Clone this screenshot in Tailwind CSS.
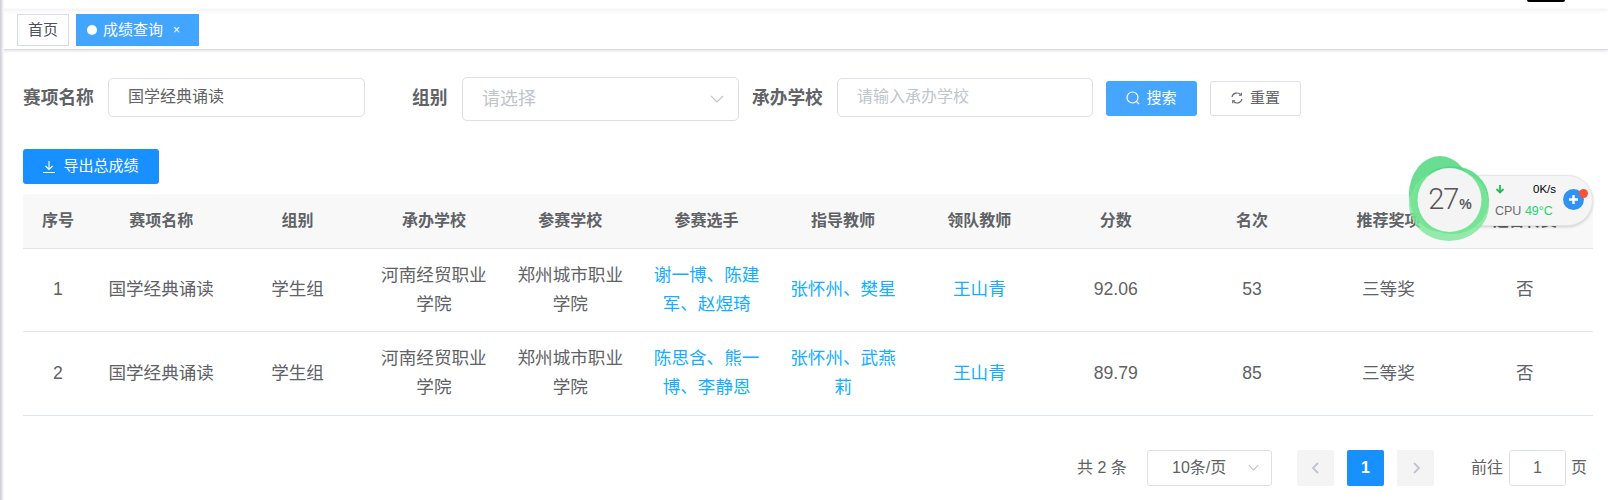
<!DOCTYPE html>
<html lang="zh-CN">
<head>
  <meta charset="UTF-8" />
  <title>成绩查询</title>
  <script src="https://cdn.jsdelivr.net/npm/@tailwindcss/browser@4"></script>
</head>
<body class="relative h-[500px] w-[1608px] overflow-hidden bg-white font-['Liberation_Sans','Noto_Sans_CJK_SC',sans-serif] text-[#606266]">

  <!-- left shadow of the sidebar -->
  <div class="absolute left-0 top-0 h-full w-[4px] bg-gradient-to-r from-[#c9cbd2] to-white"></div>
  <div class="absolute left-[1527px] top-0 h-[2px] w-[38px] rounded-b-full bg-black"></div>

  <!-- Tabs -->
  <div class="h-[9px] shadow-[0_1px_4px_rgba(0,21,41,0.08)]"></div>
  <div class="flex h-[41px] items-start gap-[7px] border-b border-[#d8dce5] pl-[17px] pt-[5px] shadow-[0_1px_3px_rgba(0,0,0,0.12)]">
    <span class="flex h-[32px] w-[52px] items-center justify-center border border-[#d8dce5] text-[15px] text-[#495060]">首页</span>
    <span class="flex h-[32px] w-[123px] items-center bg-[#42a5ff] pl-[11px] text-[15px] text-white">
      <i class="mr-[6px] h-[10px] w-[10px] rounded-full bg-white"></i>成绩查询<span class="ml-[10px] text-[12px]">×</span>
    </span>
  </div>

  <!-- Search form -->
  <div class="mt-[25px] flex h-[46px] items-center pl-[23px]">
    <label class="w-[85px] text-[17.7px] font-bold">赛项名称</label>
    <div class="mb-[2px] flex h-[39px] w-[257px] items-center rounded-[5px] border border-[#dcdfe6] pl-[19px] text-[16px]">国学经典诵读</div>
    <label class="ml-[47px] w-[50px] text-[17.7px] font-bold">组别</label>
    <div class="mt-[2px] flex h-[44px] w-[277px] items-center justify-between rounded-[5px] border border-[#dcdfe6] pl-[19px] pr-[14px] text-[18px] text-[#c0c4cc]">
      请选择
      <svg class="h-[14px] w-[14px]" viewBox="0 0 14 14" fill="none" stroke="#c0c4cc" stroke-width="1.2"><path d="M1 4l6 6 6-6"/></svg>
    </div>
    <label class="ml-[13px] w-[85px] text-[17.7px] font-bold">承办学校</label>
    <div class="mb-[2px] flex h-[39px] w-[256px] items-center rounded-[5px] border border-[#dcdfe6] pl-[19px] text-[16px] text-[#c0c4cc]">请输入承办学校</div>
    <button class="ml-[13px] flex h-[35px] w-[91px] items-center justify-center gap-[6px] rounded-[3px] bg-[#46a6ff] text-[15px] text-white">
      <svg class="h-[14px] w-[14px]" viewBox="0 0 14 14" fill="none" stroke="#fff" stroke-width="1.2"><circle cx="6.5" cy="6.5" r="5.5"/><path d="M10.5 10.5l2.5 2.5"/></svg>
      搜索
    </button>
    <button class="ml-[13px] flex h-[35px] w-[91px] items-center justify-center gap-[7px] rounded-[3px] border border-[#dcdfe6] text-[15px]">
      <svg class="h-[12px] w-[12px]" viewBox="0 0 12 12" fill="none" stroke="#606266" stroke-width="1.1"><path d="M1 5a5 5 0 0 1 8.6-2.4M11 7a5 5 0 0 1-8.6 2.4"/><path d="M10.3 .8v2.5H7.9M1.7 11.2V8.7h2.4"/></svg>
      重置
    </button>
  </div>

  <!-- Toolbar -->
  <div class="mt-[28px] pl-[23px]">
    <button class="flex h-[35px] w-[136px] items-center justify-center gap-[8px] rounded-[3px] bg-[#1890ff] text-[15px] text-white">
      <svg class="h-[12px] w-[12px]" viewBox="0 0 12 12" fill="none" stroke="#fff" stroke-width="1.1"><path d="M6 0v8M2.5 5L6 8.5 9.5 5M0 11.5h12"/></svg>
      导出总成绩
    </button>
  </div>

  <!-- Table -->
  <table class="ml-[23px] mt-[10px] w-[1570px] table-fixed border-collapse text-center">
    <colgroup>
      <col class="w-[70px]" />
    </colgroup>
    <thead>
      <tr class="h-[54px] border-b border-[#dfe6ec] bg-[#f8f8f9] text-[16px] font-bold">
        <th>序号</th><th>赛项名称</th><th>组别</th><th>承办学校</th><th>参赛学校</th><th>参赛选手</th><th>指导教师</th><th>领队教师</th><th>分数</th><th>名次</th><th>推荐奖项</th><th>是否转赛</th>
      </tr>
    </thead>
    <tbody class="text-[17.6px] leading-[29px]">
      <tr class="h-[83px] border-b border-[#dfe6ec]">
        <td>1</td><td>国学经典诵读</td><td>学生组</td>
        <td class="px-[15px]">河南经贸职业学院</td><td class="px-[15px]">郑州城市职业学院</td>
        <td class="px-[15px] text-[#13aeff]">谢一博、陈建军、赵煜琦</td>
        <td class="px-[15px] text-[#13aeff]">张怀州、樊星</td>
        <td class="px-[15px] text-[#13aeff]">王山青</td>
        <td>92.06</td><td>53</td><td>三等奖</td><td>否</td>
      </tr>
      <tr class="h-[84px] border-b border-[#dfe6ec]">
        <td>2</td><td>国学经典诵读</td><td>学生组</td>
        <td class="px-[15px]">河南经贸职业学院</td><td class="px-[15px]">郑州城市职业学院</td>
        <td class="px-[15px] text-[#13aeff]">陈思含、熊一博、李静恩</td>
        <td class="px-[15px] text-[#13aeff]">张怀州、武燕莉</td>
        <td class="px-[15px] text-[#13aeff]">王山青</td>
        <td>89.79</td><td>85</td><td>三等奖</td><td>否</td>
      </tr>
    </tbody>
  </table>

  <!-- Pagination -->
  <div class="mt-[34px] flex h-[36px] items-center pl-[1077px] text-[16px]">
    <span class="w-[70px] whitespace-nowrap">共 2 条</span>
    <div class="flex h-[36px] w-[125px] items-center justify-between rounded-[3px] border border-[#dcdfe6] pl-[24px] pr-[12px]">
      10条/页
      <svg class="h-[11px] w-[11px]" viewBox="0 0 14 14" fill="none" stroke="#c0c4cc" stroke-width="1.4"><path d="M1 4l6 6 6-6"/></svg>
    </div>
    <button class="ml-[25px] flex h-[36px] w-[37px] items-center justify-center rounded-[2px] bg-[#f4f4f5]">
      <svg class="h-[12px] w-[12px]" viewBox="0 0 12 12" fill="none" stroke="#c0c4cc" stroke-width="1.8"><path d="M8 1L3 6l5 5"/></svg>
    </button>
    <button class="ml-[13px] h-[36px] w-[37px] rounded-[2px] bg-[#1890ff] text-[16px] font-bold text-white">1</button>
    <button class="ml-[13px] flex h-[36px] w-[37px] items-center justify-center rounded-[2px] bg-[#f4f4f5]">
      <svg class="h-[12px] w-[12px]" viewBox="0 0 12 12" fill="none" stroke="#c0c4cc" stroke-width="1.8"><path d="M4 1l5 5-5 5"/></svg>
    </button>
    <span class="ml-[37px]">前往</span>
    <div class="ml-[6px] flex h-[36px] w-[57px] items-center justify-center rounded-[3px] border border-[#dcdfe6]">1</div>
    <span class="ml-[5px]">页</span>
  </div>

  <!-- Floating monitor widget -->
  <div class="absolute left-[1440px] top-[175px] h-[51px] w-[153px] rounded-full border border-[#e6e6e6] bg-[#f5f5f6] shadow-[0_1px_3px_rgba(0,0,0,0.18)]">
    <svg class="absolute left-[54px] top-[8px] h-[10px] w-[10px]" viewBox="0 0 10 10" fill="none" stroke="#22b955" stroke-width="1.8"><path d="M5 1v7M1.5 5L5 8.5 8.5 5"/></svg>
    <span class="absolute left-[92px] top-[5px] text-[11.5px] leading-[16px] text-black">0K/s</span>
    <span class="absolute left-[54px] top-[27px] whitespace-nowrap text-[12.5px] leading-[16px] text-[#6b6b75]">CPU <b class="font-normal text-[#1fd66e]">49°C</b></span>
    <svg class="absolute left-[122px] top-[13px] h-[21px] w-[21px]" viewBox="0 0 21 21"><circle cx="10.5" cy="10.5" r="10.5" fill="#2f93f5"/><path d="M10.5 6v9M6 10.5h9" stroke="#fff" stroke-width="2.4"/></svg>
    <span class="absolute left-[138px] top-[13px] h-[9px] w-[9px] rounded-full bg-[#f4533b]"></span>
  </div>
  <svg class="absolute left-[1400px] top-[150px] h-[100px] w-[100px]" viewBox="0 0 100 100">
    <ellipse cx="40" cy="44" rx="31" ry="38" fill="#4fd77f" fill-opacity="0.85"/>
    <ellipse cx="52" cy="50" rx="37" ry="34" fill="#4bd87e" fill-opacity="0.85"/>
    <ellipse cx="49" cy="55" rx="40" ry="36" fill="#7be697" fill-opacity="0.8"/>
    <circle cx="49.5" cy="50" r="32" fill="#f4f4f5"/>
  </svg>
  <div class="absolute left-[1418px] top-[168px] flex h-[64px] w-[64px] items-center justify-center">
    <span class="font-['Roboto',sans-serif] text-[29px] font-light tracking-[-1px] text-[#555]">27</span><span class="ml-[1px] mt-[8px] text-[14px] font-bold text-[#5c5c5c]">%</span>
  </div>
</body>
</html>
